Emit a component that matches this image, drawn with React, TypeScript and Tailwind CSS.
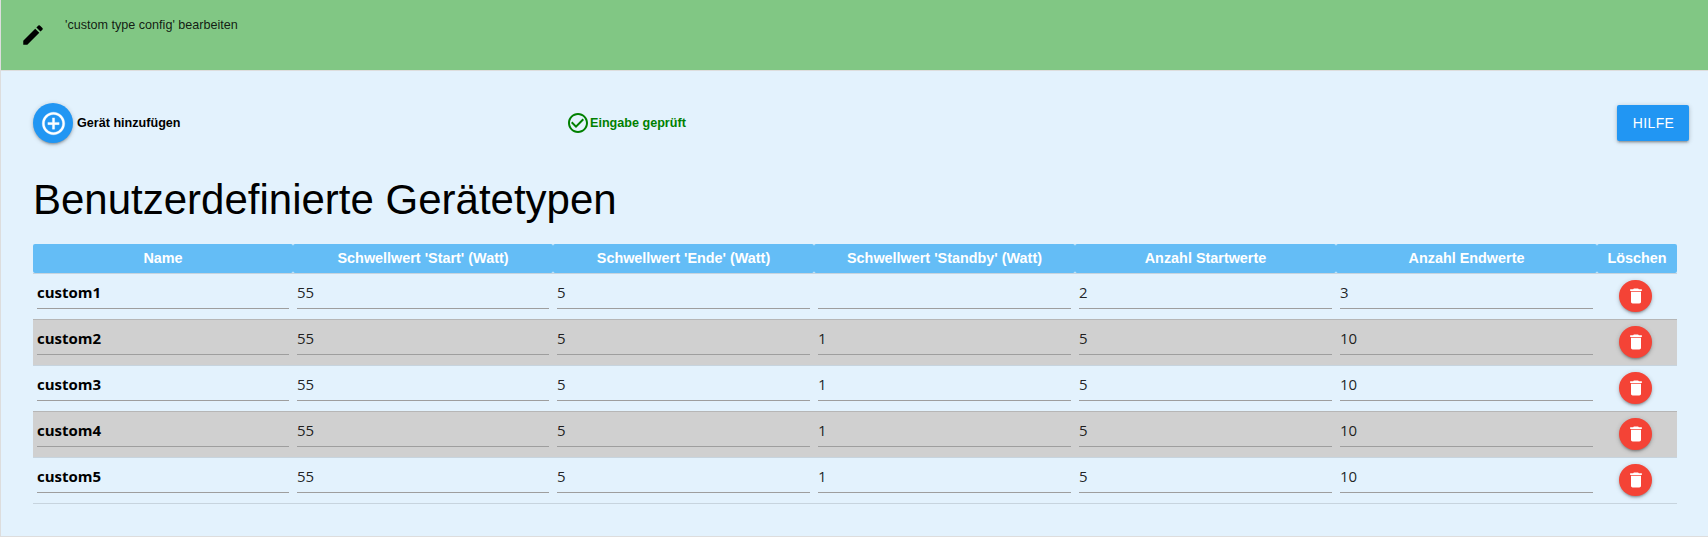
import React from "react";

type DeviceType = { name: string; values: string[] };

const headers = [
  "Name",
  "Schwellwert 'Start' (Watt)",
  "Schwellwert 'Ende' (Watt)",
  "Schwellwert 'Standby' (Watt)",
  "Anzahl Startwerte",
  "Anzahl Endwerte",
  "Löschen",
];

const devices: DeviceType[] = [
  { name: "custom1", values: ["55", "5", "", "2", "3"] },
  { name: "custom2", values: ["55", "5", "1", "5", "10"] },
  { name: "custom3", values: ["55", "5", "1", "5", "10"] },
  { name: "custom4", values: ["55", "5", "1", "5", "10"] },
  { name: "custom5", values: ["55", "5", "1", "5", "10"] },
];

const columns = "grid grid-cols-[260px_260px_261px_261px_261px_261px_80px]";
const raised =
  "shadow-[0_2px_2px_0_rgba(0,0,0,0.14),0_3px_1px_-2px_rgba(0,0,0,0.12),0_1px_5px_0_rgba(0,0,0,0.2)]";

function Icon({ d, className }: { d: string; className: string }) {
  return (
    <svg viewBox="0 0 24 24" fill="currentColor" className={className}>
      <path d={d} />
    </svg>
  );
}

const pencil =
  "M3 17.25V21h3.75L17.81 9.94l-3.75-3.75L3 17.25zM20.71 7.04a1 1 0 0 0 0-1.41l-2.34-2.34a1 1 0 0 0-1.41 0l-1.83 1.83 3.75 3.75 1.83-1.83z";
const addCircle =
  "M13 7h-2v4H7v2h4v4h2v-4h4v-2h-4V7zm-1-5C6.48 2 2 6.48 2 12s4.48 10 10 10 10-4.48 10-10S17.52 2 12 2zm0 18c-4.41 0-8-3.59-8-8s3.59-8 8-8 8 3.59 8 8-3.59 8-8 8z";
const checkCircle =
  "M16.59 7.58L10 14.17l-3.59-3.58L5 12l5 5 8-8zM12 2C6.48 2 2 6.48 2 12s4.48 10 10 10 10-4.48 10-10S17.52 2 12 2zm0 18c-4.42 0-8-3.58-8-8s3.58-8 8-8 8 3.58 8 8-3.58 8-8 8z";
const trash =
  "M6 19c0 1.1.9 2 2 2h8c1.1 0 2-.9 2-2V7H6v12zM19 4h-3.5l-1-1h-5l-1 1H5v2h14V4z";

function Field({ value, bold }: { value: string; bold?: boolean }) {
  return (
    <div className="px-1">
      <div
        className={`h-[35px] border-b border-[#9e9e9e] pt-[7px] font-['Open_Sans',sans-serif] text-[15px] leading-[22px] ${
          bold ? "font-bold text-black" : "font-normal text-black/87"
        }`}
      >
        {value}
      </div>
    </div>
  );
}

export default function App() {
  return (
    <div className="flex h-[537px] w-full flex-col overflow-hidden border-b border-l border-[#ddd] bg-[#e3f2fd] font-['Liberation_Sans',Arial,sans-serif] text-black">
      <header className="flex h-[71px] shrink-0 border-b border-[#ddd] bg-[#81c784]">
        <Icon d={pencil} className="mt-[22px] ml-[19px] size-[26px]" />
        <div className="mt-[15px] ml-[19px] text-[12.6px] leading-[20px] text-black/87">
          'custom type config' bearbeiten
        </div>
      </header>

      <div className="mt-[32px] flex h-[40px] shrink-0 items-center pr-[19px] pl-8">
        <div className="flex w-[533px] items-center">
          <button className={`flex size-10 items-center justify-center rounded-full bg-[#2196f3] text-white ${raised}`}>
            <Icon d={addCircle} className="size-[27px] stroke-current stroke-[0.3px]" />
          </button>
          <span className="ml-1 text-[12.6px] font-bold">Gerät hinzufügen</span>
        </div>
        <div className="flex items-center text-[#008000]">
          <Icon d={checkCircle} className="size-6" />
          <span className="text-[12.6px] font-bold">Eingabe geprüft</span>
        </div>
        <button
          className={`ml-auto h-9 w-[72px] rounded-[2px] bg-[#2196f3] pl-[1px] text-[14px] tracking-[0.4px] text-white ${raised}`}
        >
          HILFE
        </button>
      </div>

      <h3 className="mt-[34px] ml-8 h-[67px] shrink-0 text-[42px] leading-[46px] font-normal">
        Benutzerdefinierte Gerätetypen
      </h3>

      <div className="ml-8 w-[1644px] shrink-0">
        <div className={`${columns} h-[29px]`}>
          {headers.map((h) => (
            <div
              key={h}
              className="flex items-center justify-center rounded-[2px] bg-[#64bdf6] text-[14.4px] font-bold whitespace-nowrap text-white"
            >
              {h}
            </div>
          ))}
        </div>
        {devices.map((d) => (
          <div
            key={d.name}
            className={`${columns} h-[46px] border-t border-black/12 odd:bg-[#d0d0d0] last:h-[47px] last:border-b`}
          >
            <Field value={d.name} bold />
            {d.values.map((v, i) => (
              <Field key={i} value={v} />
            ))}
            <div className="flex justify-center pt-[6px] pr-[3px]">
              <button
                className={`flex h-[32px] w-[33px] items-center justify-center rounded-full bg-[#f44336] text-white ${raised}`}
              >
                <Icon d={trash} className="mb-px size-5" />
              </button>
            </div>
          </div>
        ))}
      </div>
    </div>
  );
}
